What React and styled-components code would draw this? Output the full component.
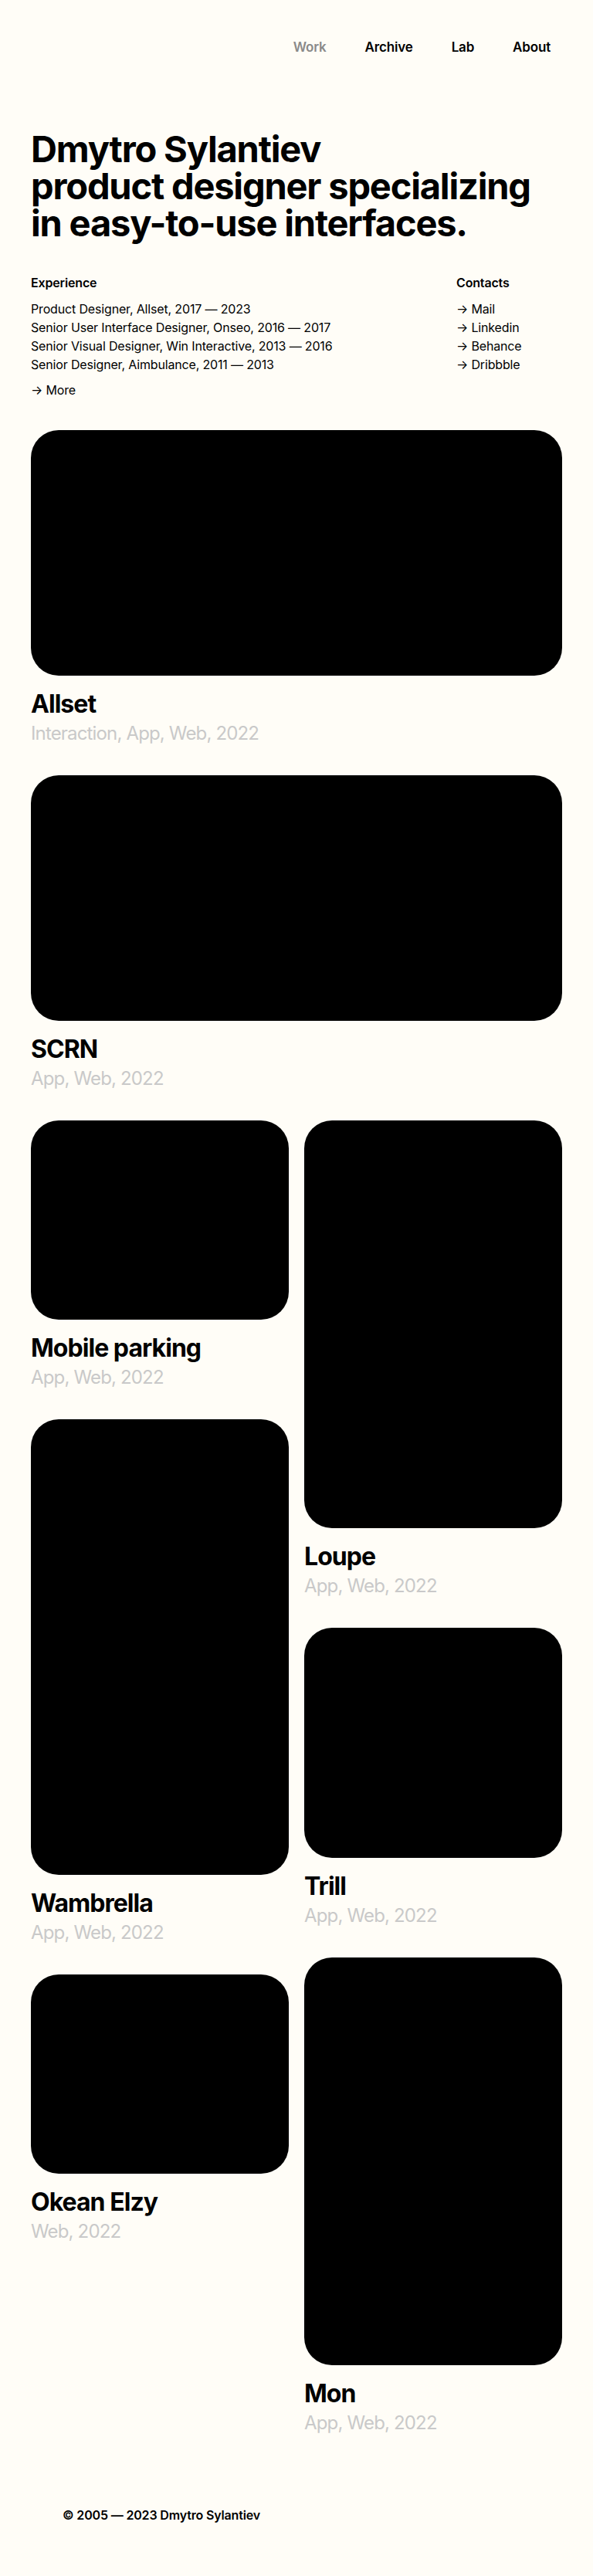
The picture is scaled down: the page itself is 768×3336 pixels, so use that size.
import React from 'react';
import styled, { createGlobalStyle } from 'styled-components';

const GlobalStyle = createGlobalStyle`
    * {
        box-sizing: border-box;
    }
    body {
        margin: 0;
        background: #fffdf7;
        color: #000;
        font-family: Inter, "Noto Sans", sans-serif;
        -webkit-font-smoothing: antialiased;
    }
`;

const Page = styled.div`
    padding: 0 40px;
    min-height: 3336px;
    display: flex;
    flex-direction: column;
`;

const Nav = styled.nav`
    display: flex;
    justify-content: flex-end;
    gap: 50px;
    padding: 49px 15px 0 0;
`;

const NavLink = styled.a`
    font-size: 17px;
    line-height: 24px;
    font-weight: 600;
    letter-spacing: -0.01em;
    color: ${p => (p.$active ? '#8a8a8a' : '#000')};
    text-decoration: none;
    cursor: pointer;
`;

const Heading = styled.h1`
    margin: 96px 0 0;
    font-size: 47px;
    line-height: 48px;
    font-weight: 700;
    letter-spacing: -0.025em;
`;

const Info = styled.section`
    display: grid;
    grid-template-columns: 1fr 137px;
    margin-top: 41px;
`;

const Label = styled.h3`
    margin: 0 0 10px;
    font-size: 16px;
    line-height: 24px;
    font-weight: 600;
    letter-spacing: -0.01em;
`;

const List = styled.div`
    display: flex;
    flex-direction: column;
`;

const Line = styled.span`
    font-size: 16px;
    line-height: 24px;
    letter-spacing: -0.01em;
`;

const More = styled(Line)`
    margin-top: 9px;
`;

const Work = styled.div`
    margin-top: 40px;
    display: flex;
    flex-direction: column;
`;

const Columns = styled.div`
    display: grid;
    grid-template-columns: 1fr 1fr;
    gap: 20px;
    align-items: start;
`;

const Column = styled.div`
    display: flex;
    flex-direction: column;
`;

const Project = styled.a`
    display: flex;
    flex-direction: column;
    margin-bottom: 37px;
    color: inherit;
    text-decoration: none;
`;

const Cover = styled.div`
    height: ${p => p.$h}px;
    background: #000;
    border-radius: 36px;
`;

const Title = styled.h2`
    margin: 18px 0 0;
    font-size: 32px;
    line-height: 38px;
    font-weight: 700;
    letter-spacing: -0.03em;
`;

const Tags = styled.p`
    margin: 2px 0 0;
    font-size: 24px;
    line-height: 34px;
    color: #c9c9c9;
    letter-spacing: -0.035em;
`;

const Footer = styled.footer`
    margin-top: auto;
    padding: 0 0 67px 41px;
    font-size: 16px;
    line-height: 24px;
    font-weight: 600;
    letter-spacing: -0.01em;
`;

const experience = [
    'Product Designer, Allset, 2017 — 2023',
    'Senior User Interface Designer, Onseo, 2016 — 2017',
    'Senior Visual Designer, Win Interactive, 2013 — 2016',
    'Senior Designer, Aimbulance, 2011 — 2013',
];

const contacts = ['Mail', 'Linkedin', 'Behance', 'Dribbble'];

const left = [
    { title: 'Mobile parking', tags: 'App, Web, 2022', h: 258 },
    { title: 'Wambrella', tags: 'App, Web, 2022', h: 590 },
    { title: 'Okean Elzy', tags: 'Web, 2022', h: 258 },
];

const right = [
    { title: 'Loupe', tags: 'App, Web, 2022', h: 528 },
    { title: 'Trill', tags: 'App, Web, 2022', h: 298 },
    { title: 'Mon', tags: 'App, Web, 2022', h: 528 },
];

const Card = ({ title, tags, h }) => (
    <Project>
        <Cover $h={h} />
        <Title>{title}</Title>
        <Tags>{tags}</Tags>
    </Project>
);

const App = () => {
    return (
        <Page>
            <GlobalStyle />
            <Nav>
                <NavLink $active>Work</NavLink>
                <NavLink>Archive</NavLink>
                <NavLink>Lab</NavLink>
                <NavLink>About</NavLink>
            </Nav>

            <Heading>
                Dmytro Sylantiev<br />
                product designer specializing<br />
                in easy-to-use interfaces.
            </Heading>

            <Info>
                <List>
                    <Label>Experience</Label>
                    {experience.map(item => <Line key={item}>{item}</Line>)}
                    <More>→ More</More>
                </List>
                <List>
                    <Label>Contacts</Label>
                    {contacts.map(item => <Line key={item}>→ {item}</Line>)}
                </List>
            </Info>

            <Work>
                <Card title="Allset" tags="Interaction, App, Web, 2022" h={318} />
                <Card title="SCRN" tags="App, Web, 2022" h={318} />
                <Columns>
                    <Column>
                        {left.map(p => <Card key={p.title} {...p} />)}
                    </Column>
                    <Column>
                        {right.map(p => <Card key={p.title} {...p} />)}
                    </Column>
                </Columns>
            </Work>

            <Footer>© 2005 — 2023 Dmytro Sylantiev</Footer>
        </Page>
    );
};

export default App;
